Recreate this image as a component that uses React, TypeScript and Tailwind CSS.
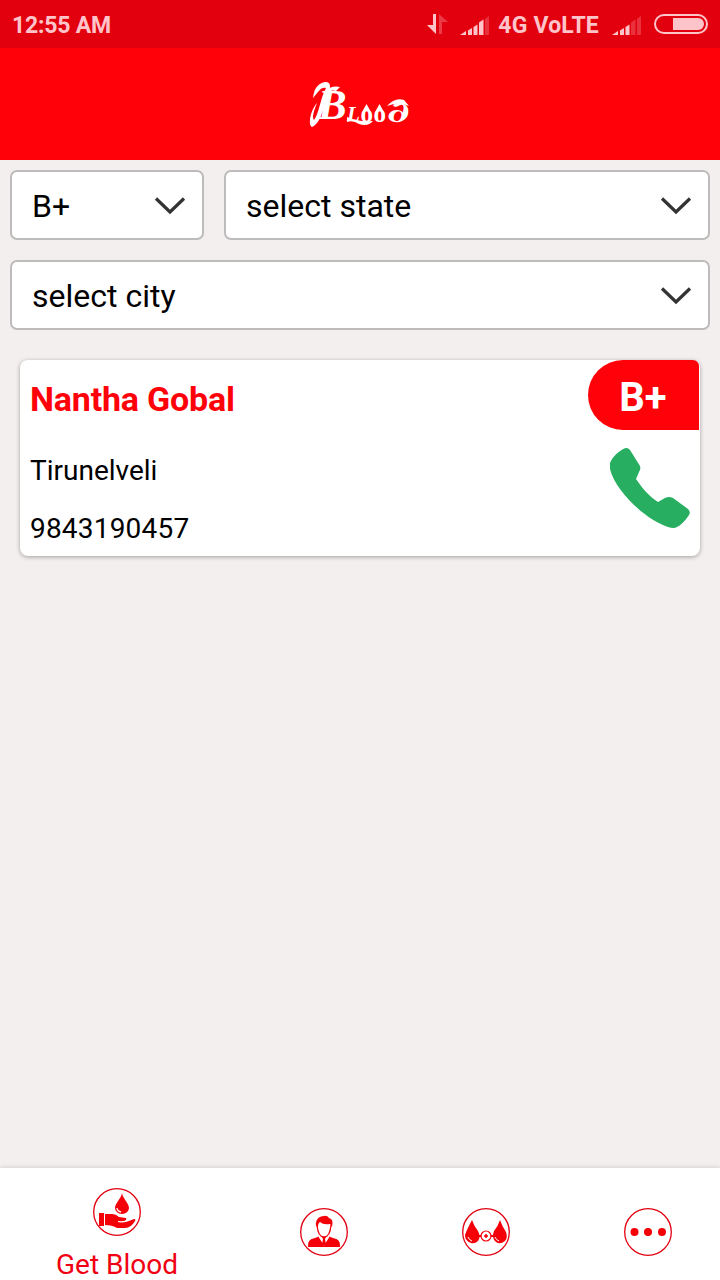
import type { ReactNode } from "react";

interface Donor {
  name: string;
  city: string;
  phone: string;
  group: string;
}

const donors: Donor[] = [
  { name: "Nantha Gobal", city: "Tirunelveli", phone: "9843190457", group: "B+" },
];

function Signal({ bars }: { bars: number }) {
  return (
    <svg width="29" height="20" viewBox="0 0 29 20" fill="#ffc4ca">
      <path d="M0 20L6 16V20Z" />
      <path d="M8 15.5L12 13V20H8Z" />
      <path d="M13.500 12L17.500 9.500V20H13.500Z" />
      <path d="M19 7.500L23.500 4.500V20H19Z" opacity={bars > 3 ? 1 : 0.25} />
      <path d="M25 4L29 1V20H25Z" opacity="0.25" />
    </svg>
  );
}

function StatusBar() {
  return (
    <div className="flex h-12 items-center justify-between bg-[#e2000f] pl-3 pr-[12px] pt-[2px] text-[23px] font-bold text-[#ffc4ca]">
      <span className="pt-[2px] tracking-[-0.2px]">12:55 AM</span>
      <div className="flex items-center">
        <svg width="21" height="20" viewBox="0 0 21 20" className="mr-3 -mt-[2px]" fill="#ffc4ca">
          <path d="M6 0H9V20L0 11H6Z" />
          <path d="M12 0L21 8H15V20H12Z" opacity="0.3" />
        </svg>
        <Signal bars={4} />
        <span className="ml-[9px] mr-[13px] whitespace-pre pt-[2px] tracking-[0.2px]">4G VoLTE</span>
        <Signal bars={3} />
        <svg width="54" height="20" viewBox="0 0 54 20" className="ml-[13px] -mt-[2px]">
          <rect x="1" y="1" width="52" height="18" rx="9" fill="none" stroke="#ffc4ca" strokeWidth="2" />
          <path d="M19 4H44A6 6 0 0 1 44 16H19Z" fill="#ffc4ca" />
        </svg>
      </div>
    </div>
  );
}

function Header() {
  return (
    <header className="flex h-28 items-center justify-center bg-[#ff0209]">
      <svg width="104" height="50" viewBox="0 0 104 50" fill="#fff" className="overflow-visible" aria-label="Blood">
        {/* flourish in front of the initial */}
        <path d="M5 19C6 8 12 3 18 3C22 3 23 7 21 12C16 23 15 43 4 48C0 46 2 32 9 24C5 34 4 39 6 41C11 35 12 20 18 9C12 8 11 13 5 19Z" />
        <path d="M17 13Q23 6 32 8L28 12Q22 10 18 16Z" />
        <text fontFamily="Liberation Serif, serif" fontWeight="700">
          <tspan x="10" y="40" fontStyle="italic" fontSize="43">B</tspan>
          <tspan x="39" y="42" fontStyle="italic" fontSize="21">L</tspan>
          <tspan x="52.500" y="43" fontSize="25">o</tspan>
          <tspan x="65.500" y="43" fontSize="25">o</tspan>
          <tspan x="79" y="43" fontFamily="DejaVu Serif, serif" fontSize="29" textLength="23" lengthAdjust="spacingAndGlyphs">∂</tspan>
        </text>
        {/* drop tips and the stroke under the word */}
        <path d="M58.500 25L63.500 34L58.500 31L53.500 34ZM71.500 25L76.500 34L71.500 31L66.500 34Z" />
        <path d="M39 38Q49 43 65 42Q60 48 51 45Q45 41 39 43Z" />
        <path d="M79 27Q87 18 96 21L101 27Q91 22 79 27Z" />
      </svg>
    </header>
  );
}

function Select({ label, className }: { label: string; className: string }) {
  return (
    <button
      type="button"
      className={`flex h-[70px] items-center justify-between rounded-[7px] border-2 border-[#bdbbbb] bg-white pl-5 pr-4 pt-[2px] text-[32px] text-black ${className}`}>
      <span>{label}</span>
      <svg width="32" height="20" viewBox="0 0 32 20" fill="none" stroke="#333" strokeWidth="3.200">
        <path d="M2 2.500L16 16L30 2.500" />
      </svg>
    </button>
  );
}

function DonorCard({ donor }: { donor: Donor }) {
  return (
    <article className="flex h-[196px] justify-between rounded-lg bg-white shadow-[0_1px_4px_rgba(0,0,0,0.35)]">
      <div className="flex flex-col pl-[10px] text-[28px] leading-[34px] text-black">
        <h2 className="mt-[19px] text-[34px] font-bold leading-10 tracking-[-0.2px] text-[#ff0209]">{donor.name}</h2>
        <p className="mt-[35px]">{donor.city}</p>
        <p className="mt-6 tracking-[0.2px]">{donor.phone}</p>
      </div>
      <div className="flex flex-col items-end pr-px">
        <div className="flex h-[70px] w-[111px] items-center justify-center rounded-l-[35px] rounded-tr-[6px] bg-[#ff0209] pr-px pt-[6px] text-[40px] font-bold text-white">
          {donor.group}
        </div>
        <svg width="80" height="80" viewBox="0 0 80 80" className="mr-[9px] mt-[18px]" fill="#27ae60">
          <path d="M0 15C3 8 9 3 15 .3Q18-.5 20 2L30 18Q31 21 29 24L26 31C32 40 39 48 48 54L55 50Q59 48 63 50L78 61Q81 64 79 67C75 73 71 77 67 79Q64 81 58 79C34 71 5 42 0 21Q-.5 18 0 15Z" />
        </svg>
      </div>
    </article>
  );
}

function RoundIcon({ children }: { children: ReactNode }) {
  return (
    <svg width="48" height="48" viewBox="0 0 48 48" fill="#f40009" className="shrink-0">
      <circle cx="24" cy="24" r="23.300" fill="none" stroke="#e20010" strokeWidth="1.300" />
      {children}
    </svg>
  );
}

function BottomNav() {
  return (
    <nav className="flex h-28 bg-white shadow-[0_-1px_4px_rgba(0,0,0,0.12)]">
      <div className="flex w-[234px] flex-col items-center pt-5 text-[28px] leading-[30px] text-[#f00012]">
        <RoundIcon>
          <path d="M29 5C30 11 36 15 36 20A7 6 0 0 1 22 20C22 15 28 11 29 5Z" />
          <path d="M24 20Q24 23 28 24" fill="none" stroke="#fff" strokeWidth="1.300" />
          <path d="M6 25H11V38H6ZM12 26H19Q23 26 26 29L33 30Q34 32 31 33L25 34Q31 35 36 33L41 31Q43 31 42 33Q38 40 32 40H24Q19 37 12 37Z" />
          <path d="M25 33.500Q33 35 36 31" fill="none" stroke="#fff" strokeWidth="1" />
        </RoundIcon>
        <span className="mt-[14px]">Get Blood</span>
      </div>
      <div className="flex w-[162px] items-center justify-center pl-[18px] pt-4">
        <RoundIcon>
          <path d="M17 17Q18 29 24 29T31 17" fill="none" stroke="#f40009" strokeWidth="1.300" />
          <path d="M16 18C15 12 19 8 24 8Q27 7 29 10Q34 11 32 19L30 16Q23 17 20 14Q18 15 18 19Z" />
          <path d="M8 39Q7 31 15 30L20 28L24 38L28 28L33 30Q41 31 40 39Z" />
          <path d="M19 28L24 36L29 28" fill="none" stroke="#fff" strokeWidth="1.500" />
          <path d="M22 29H26L25 31L26 36L24 38L22 36L23 31Z" />
        </RoundIcon>
      </div>
      <div className="flex w-[162px] items-center justify-center pl-[18px] pt-4">
        <RoundIcon>
          <path d="M10 12Q12 18 16 23Q19 29 16 33Q13 36 9 35Q3 33 3 27Q5 21 10 12ZM38 12Q40 18 44 24Q46 30 43 33Q38 37 34 34Q29 30 32 23Q36 18 38 12Z" />
          <path d="M6 29Q7 32 10 33M33 29Q34 32 37 33" fill="none" stroke="#fff" />
          <path d="M17 28H31" stroke="#f40009" strokeWidth="2" />
          <circle cx="24" cy="28" r="5" fill="#fff" stroke="#f40009" strokeWidth="1.200" />
          <path d="M24 26V30M22 28H26" stroke="#f40009" strokeWidth="1.500" />
        </RoundIcon>
      </div>
      <div className="flex w-[162px] items-center justify-center pl-[18px] pt-4">
        <RoundIcon>
          <circle cx="10.500" cy="24" r="4" />
          <circle cx="24" cy="24" r="4" />
          <circle cx="38" cy="24" r="4" />
        </RoundIcon>
      </div>
    </nav>
  );
}

export default function App() {
  return (
    <div className="flex h-[1280px] w-[720px] flex-col overflow-hidden bg-[#f3efee] font-['Roboto',sans-serif]">
      <StatusBar />
      <Header />
      <main className="flex flex-1 flex-col">
        <div className="flex gap-5 px-[10px] pt-[10px]">
          <Select label="B+" className="w-[194px]" />
          <Select label="select state" className="flex-1" />
        </div>
        <div className="flex px-[10px] pt-5">
          <Select label="select city" className="flex-1" />
        </div>
        <div className="flex flex-col px-5 pt-[30px]">
          {donors.map((donor) => (
            <DonorCard key={donor.phone} donor={donor} />
          ))}
        </div>
      </main>
      <BottomNav />
    </div>
  );
}
